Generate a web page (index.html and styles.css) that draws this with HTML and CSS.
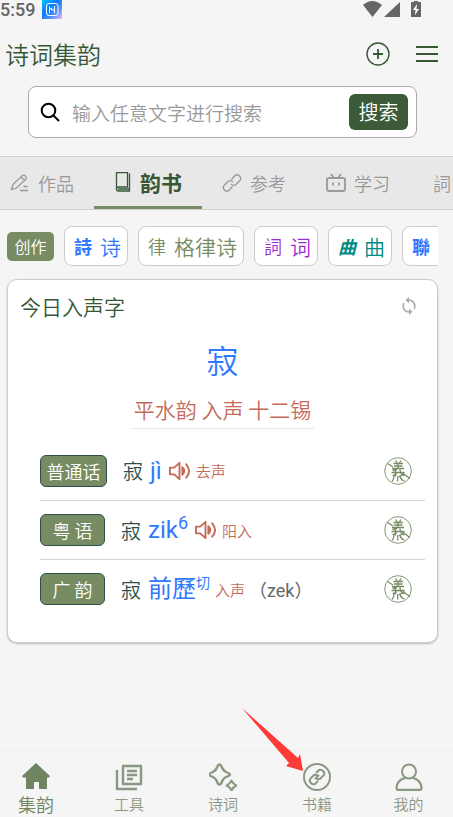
FILE: index.html
```html
<!DOCTYPE html>
<html lang="zh-CN">
<head>
<meta charset="utf-8">
<meta name="viewport" content="width=device-width, initial-scale=1">
<title>诗词集韵</title>
<link rel="stylesheet" href="styles.css">
</head>
<body>
<svg class="defs" aria-hidden="true">
  <symbol id="speaker" viewBox="0 0 24 22"><path d="M2 7.500h4.500L12 2.500v17l-5.500-5H2zM15 7v8q4-4 0-8M19 4q6 7 0 14" fill="none" stroke="currentColor" stroke-width="2" stroke-linejoin="round" stroke-linecap="round"/></symbol>
  <symbol id="meaning" viewBox="0 0 28 28"><g fill="none" stroke="currentColor"><circle cx="14" cy="14" r="13.300" stroke-width=".9"/><path d="M3.500 6.500l5.500 3.500M19 16.500l7 5" stroke-width="1.300"/><path d="M11.500 3.500l1.500 2.500M17 3.500L15.500 6M9.500 6.500h9.500M10 9h8.500M8 11.500h12M14 6.500v5M13 12.500l-4.500 1M7.500 15.500h13M11.500 13v6.500M8.500 18.500l4.500-1.500M16 12.500q0 5 4.500 6.500M20 16.500q-3 3-5 3M10 18.500q0 4-2 6M13.700 19v5.500M16 19.500q1 3.500 4.500 4.500" stroke-width="1.300"/></g></symbol>
</svg>
<div class="status">
  <span class="time">5:59</span>
  <svg class="app-mark" viewBox="0 0 20 20"><defs><linearGradient id="mark" x1="0" y1="0" x2="1" y2="1"><stop offset="0" stop-color="#00c8ff"/><stop offset=".4" stop-color="#087cff"/><stop offset=".65" stop-color="#4c8cff"/><stop offset="1" stop-color="#f0b8fa"/></linearGradient></defs><path fill="url(#mark)" d="M0 0h20v19H0z"/><rect x="4.500" y="3.500" width="11.500" height="12" rx="2.500" fill="none" stroke="#fff"/><path d="M7.500 6.500v6.500M12.500 6v7M7.500 9.500l2-1.500v2h3" fill="none" stroke="#fff"/></svg>
  <svg class="signals" viewBox="0 0 60 20" fill="#666"><path d="M1 5q9-8 19 0l-9.500 12zM22 17L38 2v15zM49 2h3V1h4v1h3v15H49z"/><path d="M55 4l-4 6h2.500L53 15l4-6h-2.500z" fill="#fff"/></svg>
</div>
<header class="header">
  <h1>诗词集韵</h1>
  <button class="icon-button" aria-label="添加"><svg viewBox="0 0 24 24"><circle cx="12" cy="12" r="11"/><path d="M7 12h10M12 7v10" stroke-width="1.800"/></svg></button>
  <button class="icon-button" aria-label="菜单"><svg viewBox="0 0 24 24"><path d="M1 5h22M1 12h22M1 19h22" stroke-width="1.800"/></svg></button>
</header>
<form class="search">
  <label for="query" aria-label="搜索诗词"><svg viewBox="0 0 20 20"><circle cx="8.500" cy="8.500" r="6.800"/><path d="M13.500 13.500l5.500 5.500"/></svg></label>
  <input id="query" type="text" placeholder="输入任意文字进行搜索">
  <button type="button">搜索</button>
</form>
<nav class="tabs" aria-label="分类">
  <a href="#"><svg viewBox="0 0 20 20"><path d="M1.500 16.500l1.500-5L12.500 2.500q1.500-1 3 .5t.5 3L6.500 15zM11 4l3.500 3.500M10 17.500h8M13.500 13.500h4"/></svg>作品</a>
  <a href="#" class="active"><svg class="book" viewBox="0 0 16 20"><path d="M1.500 17V.700h11V15h-9q-2 0-2 2t2 2H14.500V1.500M3 17h11"/></svg>韵书</a>
  <a href="#"><svg viewBox="0 0 20 20"><path d="M9.500 6.500L12.500 3q2.500-2.500 5 0t0 5l-3.500 3.500q-2.500 2-5-.5M10.500 13.500L7.500 17q-2.500 2.500-5 0t0-5L6 8.500q2.500-2 5 .5"/></svg>参考</a>
  <a href="#"><svg viewBox="0 0 20 20"><path d="M3 5h14q2 0 2 2v9q0 2-2 2H3q-2 0-2-2V7q0-2 2-2zM5 1l3 4M15 1l-3 4M7 9.500v3M13 9.500v3" stroke-width="1.800"/></svg>学习</a>
  <a href="#">詞</a>
</nav>
<main>
  <div class="chips">
    <button class="make">创作</button>
    <button class="chip blue"><span class="brush">詩</span>诗</button>
    <button class="chip olive"><span>律</span>格律诗</button>
    <button class="chip purple"><span>詞</span>词</button>
    <button class="chip teal"><span class="brush slanted">曲</span>曲</button>
    <button class="chip blue more"><span class="brush">聯</span></button>
  </div>
  <section class="card">
    <div class="card-head"><h2>今日入声字</h2><button aria-label="换一个"><svg viewBox="0 0 24 24"><path fill="currentColor" d="M12 6v3l4-4-4-4v3c-4.420 0-8 3.580-8 8 0 1.570.460 3.030 1.240 4.260L6.700 14.800C6.250 13.970 6 13.010 6 12c0-3.310 2.690-6 6-6zm6.760 1.740L17.300 9.200c.440.840.700 1.790.700 2.800 0 3.310-2.690 6-6 6v-3l-4 4 4 4v-3c4.420 0 8-3.580 8-8 0-1.570-.460-3.030-1.240-4.260z" transform="matrix(-1 0 0 1 24 0)"/></svg></button></div>
    <div class="hero">寂</div>
    <div class="rhyme"><span>平水韵 入声 十二锡</span></div>
    <ul class="readings">
      <li><span class="badge wide">普通话</span><span class="word">寂</span><span class="sound">jì</span><button class="play" aria-label="播放"><svg><use href="#speaker"/></svg></button><span class="tone">去声</span><button class="meaning" aria-label="释义"><svg><use href="#meaning"/></svg></button></li>
      <li><span class="badge">粤 语</span><span class="word">寂</span><span class="sound">zik<sup>6</sup></span><button class="play" aria-label="播放"><svg><use href="#speaker"/></svg></button><span class="tone">阳入</span><button class="meaning" aria-label="释义"><svg><use href="#meaning"/></svg></button></li>
      <li><span class="badge">广 韵</span><span class="word">寂</span><span class="sound">前歷<sup class="cut">切</sup></span><span class="tone">入声</span><span class="roman">（zek）</span><button class="meaning" aria-label="释义"><svg><use href="#meaning"/></svg></button></li>
    </ul>
  </section>
</main>
<nav class="bottom" aria-label="主导航">
  <a href="#" class="current"><svg viewBox="0 0 28 28"><path fill="currentColor" stroke="none" d="M14 0L28 13l-1 1.500h-2V26h-8v-7h-5v7H4V14.500H1L0 13z"/></svg>集韵</a>
  <a href="#"><svg viewBox="0 0 28 28"><path d="M8 3h18v18H8zM2 7v19h20M12 8h10M12 12h10M12 16h6" stroke-width="2.400" stroke-linejoin="round"/></svg>工具</a>
  <a href="#"><svg viewBox="0 0 28 28"><path d="M10.500 1.500q1.500 0 2.500 3 1 3 4 4.500 4 1.500 4 2.500t-4 2.500q-3 1.500-4 4.500t-2.500 3-2.500-3q-1-3-4-4.500-4-1.500-4-2.500t4-2.500q3-1.500 4-4.500t2.500-3z" stroke-width="2.400"/><path d="M22.500 17.500q1.500 3.500 5 5-3.500 1.500-5 5-1.500-3.500-5-5 3.500-1.500 5-5z" stroke-width="2" stroke-linejoin="round"/></svg>诗词</a>
  <a href="#"><svg viewBox="0 0 28 28"><circle cx="14" cy="14" r="13"/><path d="M13 10l3-3q2-1 4 1t1 4l-4 4q-2 1-4-1M15 18l-3 3q-2 1-4-1t-1-4l4-4q2-1 4 1M12 16l4-4"/></svg>书籍
    <svg class="pointer" viewBox="0 0 62 64"><path fill="#ff3b38" d="M0 0l56 50 2-4 3 17-17-5 3-3z"/></svg></a>
  <a href="#"><svg viewBox="0 0 28 28"><circle cx="14" cy="8.500" r="7"/><path d="M10 15Q2 17 1.500 25q0 2 2 2h21q2 0 2-2Q26 17 18 15" stroke-width="2.300"/></svg>我的</a>
</nav>
</body>
</html>
```
FILE: styles.css
```css
* { box-sizing: border-box; }
body {
  margin: 0;
  min-height: 100vh;
  display: flex;
  flex-direction: column;
  overflow-x: hidden;
  background: #f5f5f5;
  color: #375735;
  font-family: "Noto Sans CJK SC", sans-serif;
  font-weight: 350;
}
button { border: 0; padding: 0; background: none; color: inherit; font: inherit; }
a { color: inherit; text-decoration: none; }
svg { display: block; flex-shrink: 0; }
.defs { position: absolute; width: 0; height: 0; }

.status { display: flex; align-items: center; height: 20px; padding-right: 31px; }
.time { font: 500 18px/20px Roboto, sans-serif; color: #666; }
.app-mark { width: 20px; height: 20px; margin-left: 7px; }
.signals { width: 60px; height: 20px; margin-left: auto; }

.header { display: flex; align-items: center; gap: 25px; height: 66px; padding: 2px 14px 0 5px; }
h1 { flex: 1; margin: 0; font-size: 24px; line-height: 36px; font-weight: 350; }
.icon-button { width: 24px; height: 24px; }
.icon-button svg { width: 24px; height: 24px; fill: none; stroke: #375735; stroke-width: 1.4; }

.search {
  display: flex;
  align-items: center;
  height: 52px;
  margin: 0 36px 18px 28px;
  padding: 0 8px 0 11px;
  background: #fff;
  border: 1px solid #aaa;
  border-radius: 8px;
}
.search svg { width: 20px; height: 20px; fill: none; stroke: #000; stroke-width: 2; }
.search input { flex: 1; min-width: 0; padding: 0 12px; border: 0; outline: 0; background: none; font: inherit; font-size: 19px; }
.search input::placeholder { color: #999; }
.search button { width: 59px; height: 36px; border-radius: 6px; background: #3a5a38; color: #fff; font-size: 20px; line-height: 36px; }

.tabs { display: flex; height: 54px; flex-shrink: 0; overflow: hidden; background: #e8e8e8; border: solid #d0d0d0; border-width: 1px 0; }
.tabs a { display: flex; flex-shrink: 0; align-items: center; gap: 8px; padding: 0 20px; color: #999; font-size: 18px; }
.tabs a:first-child { padding-left: 10px; }
.tabs a:last-child { padding-left: 23px; }
.tabs svg { width: 20px; height: 20px; fill: none; stroke: currentColor; stroke-width: 1.3; }
.tabs .book { width: 16px; }
.tabs .active { gap: 9px; padding-left: 21px; border-bottom: 3px solid #788c64; color: #375735; font-size: 21px; font-weight: 700; }

main { padding: 16px 15px 16px 7px; }
.chips { display: flex; align-items: center; gap: 10px; overflow: hidden; }
.make { flex: 0 0 47px; height: 29px; border-radius: 5px; background: #788c64; color: #fff; font-size: 16px; line-height: 29px; }
.chip { display: flex; flex-shrink: 0; align-items: center; gap: 8px; height: 40px; padding: 0 6px 0 9px; background: #fff; border: 1px solid #ccc; border-radius: 8px; font-size: 21px; line-height: 36px; }
.chip span { font-size: 18px; }
.chip .brush { font-weight: 700; }
.chip .slanted { font-style: italic; }
.more { width: 64px; }
.blue { color: #3178ff; }
.olive { color: #788c64; }
.purple { color: #9b2ed3; }
.teal { color: #008b85; }

.card { margin-top: 13px; padding: 9px 12px 24px; background: #fff; border: 1px solid #ccc; border-radius: 10px; box-shadow: 0 1px 2px #bbb; }
.card-head { display: flex; align-items: center; justify-content: space-between; padding-right: 6px; }
h2 { margin: 0; font-size: 21px; line-height: 34px; font-weight: 350; }
.card-head svg { width: 20px; height: 20px; color: #aaa; }
.hero { margin-top: 12px; color: #3178ff; font-size: 32px; line-height: 48px; text-align: center; }
.rhyme { display: flex; justify-content: center; margin-top: 10px; color: #c46a59; font-size: 21px; line-height: 32px; }
.rhyme span { padding: 0 3px 3px; border-bottom: 1px solid #e8e8e8; }
.readings { margin: 12px 0 0; padding: 0 0 0 20px; list-style: none; }
.readings li { display: flex; align-items: center; height: 59px; padding-right: 13px; color: #2f4f4a; font-size: 20px; }
.readings li + li { border-top: 1px solid #d6d6d6; }
.badge { width: 65px; height: 32px; border: 1px solid #2f4f4f; border-radius: 6px; background: #788c64; color: #fff; font-size: 18px; line-height: 30px; text-align: center; }
.badge.wide { width: 67px; }
.word { margin-left: 16px; }
.sound { margin-left: 7px; color: #3178ff; font-family: Roboto, "Noto Sans CJK SC", sans-serif; font-size: 24px; font-weight: 400; line-height: 36px; }
.sound sup { font-size: 18px; line-height: 0; }
.sound .cut { font-size: 14px; }
.play { margin-left: 6px; color: #c46a59; }
.play svg { width: 23px; height: 22px; }
.tone { margin-left: 5px; color: #c46a59; font-size: 15px; }
.roman { margin-left: 4px; color: #666; font-family: Roboto, "Noto Sans CJK SC", sans-serif; font-size: 18px; font-weight: 400; }
.meaning { margin-left: auto; color: #788c64; }
.meaning svg { width: 28px; height: 28px; }

.bottom { display: flex; height: 67px; margin-top: auto; padding-top: 12px; border-top: 1px solid #eee; background: #f5f5f5; }
.bottom a { position: relative; display: flex; flex: 1 1 0; flex-direction: column; align-items: center; color: #8b9881; font-size: 15px; line-height: 26px; }
.bottom a:first-child { flex: 0 0 82px; padding-right: 10px; }
.bottom a:last-child { flex: 0 0 89px; }
.bottom svg { width: 28px; height: 28px; fill: none; stroke: currentColor; stroke-width: 2; }
.bottom .current { color: #708462; font-size: 18px; }
.bottom .pointer { position: absolute; right: 60px; bottom: 45px; width: 62px; height: 64px; stroke: none; }
```
